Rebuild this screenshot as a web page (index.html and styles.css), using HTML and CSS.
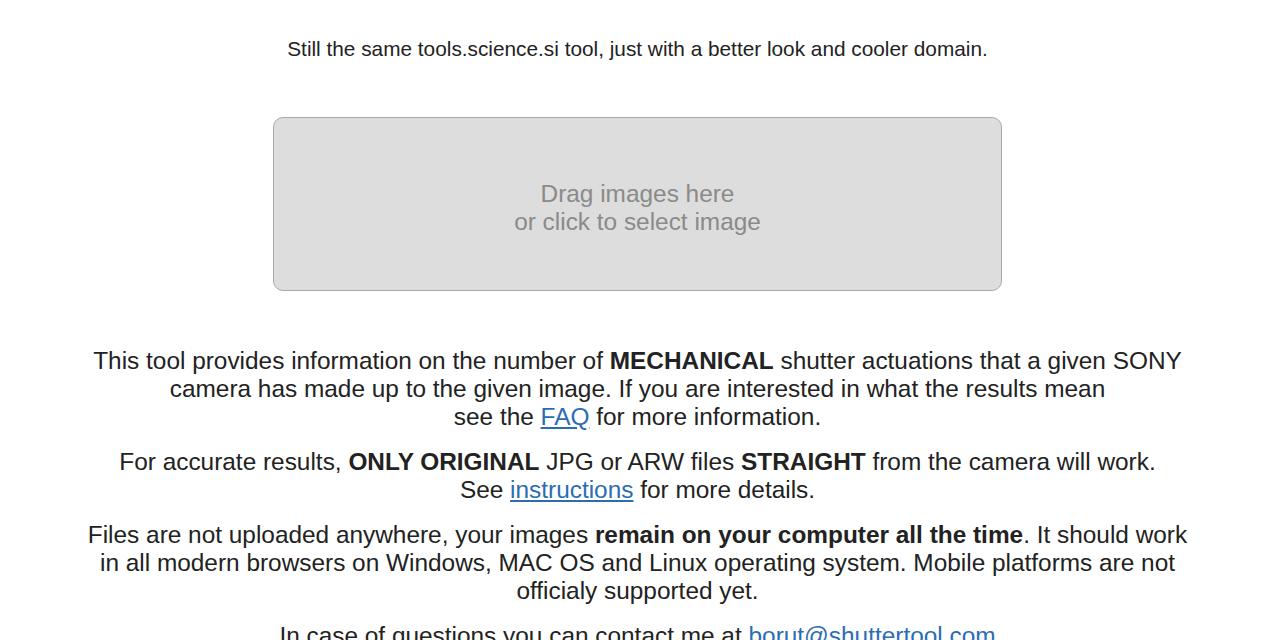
FILE: index.html
```html
<!DOCTYPE html>
<html>
<head>
<meta charset="utf-8">
<link rel="stylesheet" href="styles.css">
</head>
<body>
<main class="page">
  <p class="tagline">Still the same tools.science.si tool, just with a better look and cooler domain.</p>
  <div class="dropzone">
    <div class="dropzone-text">Drag images here<br>or click to select image</div>
  </div>
  <section class="info">
    <p>This tool provides information on the number of <b>MECHANICAL</b> shutter actuations that a given SONY camera has made up to the given image. If you are interested in what the results mean<br>see the <a href="#">FAQ</a> for more information.</p>
    <p>For accurate results, <b>ONLY ORIGINAL</b> JPG or ARW files <b>STRAIGHT</b> from the camera will work.<br>See <a href="#">instructions</a> for more details.</p>
    <p>Files are not uploaded anywhere, your images <b>remain on your computer all the time</b>. It should work in all modern browsers on Windows, MAC OS and Linux operating system. Mobile platforms are not officialy supported yet.</p>
    <p>In case of questions you can contact me at <a href="#">borut@shuttertool.com</a></p>
  </section>
</main>
</body>
</html>
```
FILE: styles.css
```css
html, body {
  margin: 0;
  padding: 0;
  background: #fff;
}
body {
  font-family: "Liberation Sans", Arial, Helvetica, sans-serif;
  color: #222;
  padding-right: 5px;
}
.page {
  width: 1104px;
  margin: 0 auto;
  text-align: center;
  padding-top: 36px;
}
.tagline {
  margin: 0;
  font-size: 20.8px;
  line-height: 26px;
  color: #222;
}
.dropzone {
  box-sizing: border-box;
  width: 729px;
  height: 174px;
  margin: 55px auto 0;
  background: #dddddd;
  border: 1px solid #a9a9a9;
  border-radius: 10px;
  display: flex;
  align-items: center;
  justify-content: center;
}
.dropzone-text {
  font-size: 24.4px;
  line-height: 28px;
  color: #8a8a8a;
  margin-top: 8px;
}
.info {
  margin-top: 56px;
}
.info p {
  margin: 0 0 17px;
  font-size: 24.4px;
  line-height: 28px;
}
.info a {
  color: #2a6db3;
  text-decoration: underline;
}
```
